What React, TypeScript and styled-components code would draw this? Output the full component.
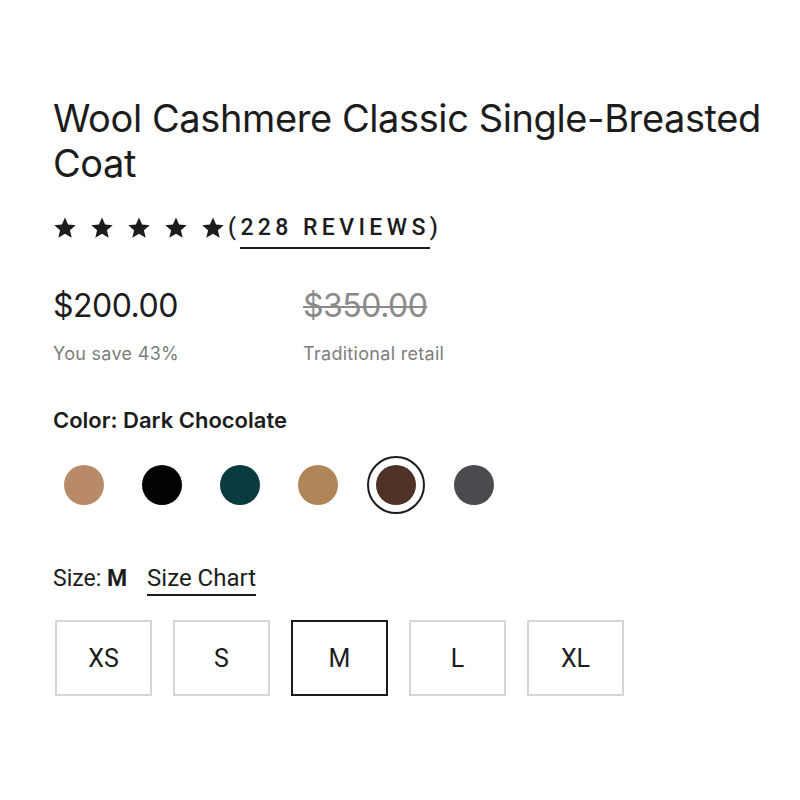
import React, { useState } from 'react'
import styled, { createGlobalStyle } from 'styled-components'

const GlobalStyle = createGlobalStyle`
  html, body {
    margin: 0;
    padding: 0;
    background: #fff;
  }
  body {
    font-family: Inter, 'Liberation Sans', sans-serif;
    color: #1a1a1a;
  }
`

const Panel = styled.div`
  width: 800px;
  height: 800px;
  box-sizing: border-box;
  padding: 96px 20px 0 53px;
`

const Title = styled.h1`
  margin: 0;
  font-size: 38px;
  font-weight: 400;
  line-height: 45px;
  letter-spacing: -0.4px;
  color: #1c1c1c;
`

const RatingRow = styled.div`
  display: flex;
  align-items: center;
  margin-top: 28px;
  height: 28px;
`

const Stars = styled.div`
  display: flex;
  gap: 13px;
`

const ReviewsLink = styled.span`
  font-family: Roboto, 'Liberation Sans', sans-serif;
  font-size: 23px;
  line-height: 26px;
  letter-spacing: 4.4px;
  font-weight: 500;
  color: #1c1c1c;
  margin-left: 3px;
`

const Underlined = styled.span`
  border-bottom: 2px solid #1c1c1c;
  padding-bottom: 6px;
`

const PriceRow = styled.div`
  display: grid;
  grid-template-columns: 250px auto;
  margin-top: 45px;
`

const PriceCol = styled.div`
  display: flex;
  flex-direction: column;
  gap: 18px;
`

const Price = styled.div<{ $old?: boolean }>`
  font-size: 32px;
  line-height: 38px;
  letter-spacing: -0.5px;
  color: ${p => (p.$old ? '#8a8a8a' : '#1c1c1c')};
  text-decoration: ${p => (p.$old ? 'line-through' : 'none')};
  text-decoration-thickness: 2px;
`

const PriceNote = styled.div`
  font-size: 18px;
  line-height: 22px;
  letter-spacing: 0.3px;
  color: #7d7d7d;
`

const ColorLabel = styled.div`
  font-size: 22px;
  line-height: 26px;
  font-weight: 600;
  color: #1c1c1c;
  margin-top: 42px;
`

const Swatches = styled.div`
  display: flex;
  gap: 20px;
  margin-top: 23px;
  margin-left: 2px;
`

const SwatchRing = styled.button<{ $active: boolean }>`
  width: 58px;
  height: 58px;
  padding: 0;
  border-radius: 50%;
  border: 2px solid ${p => (p.$active ? '#1c1c1c' : 'transparent')};
  background: transparent;
  display: flex;
  align-items: center;
  justify-content: center;
  cursor: pointer;
`

const SwatchDot = styled.span<{ $color: string }>`
  width: 40px;
  height: 40px;
  border-radius: 50%;
  background: ${p => p.$color};
`

const SizeHeader = styled.div`
  display: flex;
  align-items: baseline;
  gap: 20px;
  margin-top: 51px;
  font-family: Roboto, 'Liberation Sans', sans-serif;
  line-height: 26px;
  color: #1c1c1c;
`

const SizeLabel = styled.span`
  font-size: 23px;
`

const Strong = styled.span`
  font-weight: 700;
`

const SizeChart = styled.span`
  font-size: 24px;
  border-bottom: 2px solid #1c1c1c;
  padding-bottom: 3px;
`

const SizeGrid = styled.div`
  display: flex;
  gap: 21px;
  margin-top: 24px;
  margin-left: 2px;
`

const SizeButton = styled.button<{ $active: boolean }>`
  width: 97px;
  height: 76px;
  box-sizing: border-box;
  background: #fff;
  border: ${p => (p.$active ? '2px solid #1c1c1c' : '2px solid #d6d6d6')};
  font-family: Roboto, 'Liberation Sans', sans-serif;
  font-size: 25px;
  color: #1c1c1c;
  cursor: pointer;
`

const Star = () => (
  <svg width="24" height="24" viewBox="0 0 24 24">
    <path
      d="M12 1.5l3.1 7.1 7.6.7-5.8 5 1.8 7.5L12 17.8l-6.7 4 1.8-7.5-5.8-5 7.6-.7z"
      fill="#1c1c1c"
    />
  </svg>
)

const colors = [
  { name: 'Camel', hex: '#b98a67' },
  { name: 'Black', hex: '#030303' },
  { name: 'Deep Teal', hex: '#0b3a40' },
  { name: 'Tan', hex: '#b08557' },
  { name: 'Dark Chocolate', hex: '#4e3226' },
  { name: 'Charcoal', hex: '#4a4a4f' },
]

const sizes = ['XS', 'S', 'M', 'L', 'XL']

export default function App() {
  const [color, setColor] = useState('Dark Chocolate')
  const [size, setSize] = useState('M')

  return (
    <Panel>
      <GlobalStyle />
      <Title>Wool Cashmere Classic Single-Breasted Coat</Title>

      <RatingRow>
        <Stars>
          {[0, 1, 2, 3, 4].map(i => (
            <Star key={i} />
          ))}
        </Stars>
        <ReviewsLink>
          (<Underlined>228 REVIEWS</Underlined>)
        </ReviewsLink>
      </RatingRow>

      <PriceRow>
        <PriceCol>
          <Price>$200.00</Price>
          <PriceNote>You save 43%</PriceNote>
        </PriceCol>
        <PriceCol>
          <Price $old>$350.00</Price>
          <PriceNote>Traditional retail</PriceNote>
        </PriceCol>
      </PriceRow>

      <ColorLabel>Color: {color}</ColorLabel>
      <Swatches>
        {colors.map(c => (
          <SwatchRing
            key={c.name}
            $active={c.name === color}
            aria-label={c.name}
            onClick={() => setColor(c.name)}
          >
            <SwatchDot $color={c.hex} />
          </SwatchRing>
        ))}
      </Swatches>

      <SizeHeader>
        <SizeLabel>
          Size: <Strong>{size}</Strong>
        </SizeLabel>
        <SizeChart>Size Chart</SizeChart>
      </SizeHeader>
      <SizeGrid>
        {sizes.map(s => (
          <SizeButton key={s} $active={s === size} onClick={() => setSize(s)}>
            {s}
          </SizeButton>
        ))}
      </SizeGrid>
    </Panel>
  )
}
